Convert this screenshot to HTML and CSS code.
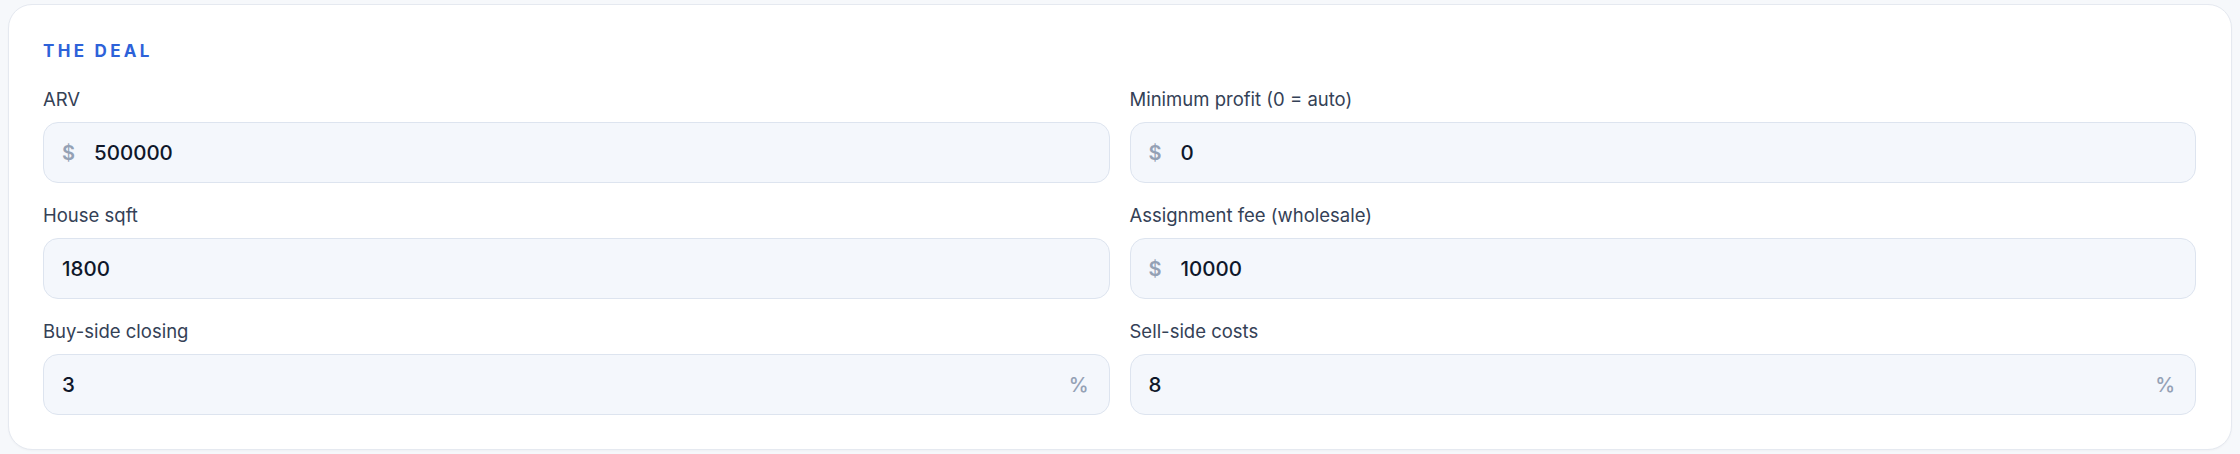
FILE: index.html
```html
<!DOCTYPE html>
<html lang="en">
<head>
<meta charset="utf-8">
<title>The Deal</title>
<link rel="stylesheet" href="styles.css">
</head>
<body>
<section class="card">
  <h2 class="card-title">THE DEAL</h2>
  <div class="fields">
    <label class="field">
      <span class="field-label">ARV</span>
      <span class="control"><span class="affix prefix">$</span><input class="value" type="text" value="500000"></span>
    </label>
    <label class="field">
      <span class="field-label">Minimum profit (0 = auto)</span>
      <span class="control"><span class="affix prefix">$</span><input class="value" type="text" value="0"></span>
    </label>
    <label class="field">
      <span class="field-label">House sqft</span>
      <span class="control"><input class="value" type="text" value="1800"></span>
    </label>
    <label class="field">
      <span class="field-label">Assignment fee (wholesale)</span>
      <span class="control"><span class="affix prefix">$</span><input class="value" type="text" value="10000"></span>
    </label>
    <label class="field">
      <span class="field-label">Buy-side closing</span>
      <span class="control"><input class="value" type="text" value="3"><span class="affix suffix">%</span></span>
    </label>
    <label class="field">
      <span class="field-label">Sell-side costs</span>
      <span class="control"><input class="value" type="text" value="8"><span class="affix suffix">%</span></span>
    </label>
  </div>
</section>
</body>
</html>
```
FILE: styles.css
```css
* { box-sizing: border-box; }

html, body {
  margin: 0;
  background: #f6f8fb;
}

body {
  padding: 4px 8px;
  font-family: Inter, "Noto Sans", sans-serif;
}

.card {
  background: #ffffff;
  border: 1px solid #e5e9f0;
  border-radius: 24px;
  padding: 34px 35px 34px 34px;
  box-shadow: 0 1px 2px rgba(15, 23, 42, 0.03);
}

.card-title {
  margin: 0 0 23px;
  font-size: 17px;
  line-height: 24px;
  font-weight: 700;
  letter-spacing: 3.3px;
  color: #2d62d9;
}

.fields {
  display: grid;
  grid-template-columns: 1fr 1fr;
  column-gap: 20px;
  row-gap: 19px;
}

.field {
  display: flex;
  flex-direction: column;
  gap: 10px;
}

.field-label {
  font-size: 18.5px;
  line-height: 26px;
  color: #344156;
}

.control {
  display: flex;
  align-items: center;
  height: 61px;
  padding: 0 20px 0 18px;
  background: #f4f7fc;
  border: 1px solid #dde4ef;
  border-radius: 15px;
}

.affix {
  font-size: 20px;
  font-weight: 600;
  color: #94a1b5;
}

.prefix {
  margin-right: 19px;
}

.suffix {
  margin-left: 12px;
  font-weight: 500;
}

.value {
  flex: 1;
  min-width: 0;
  border: 0;
  outline: 0;
  padding: 0;
  background: transparent;
  font-family: Inter, "Noto Sans", sans-serif;
  font-size: 20.5px;
  font-weight: 500;
  color: #0f172a;
}
```
